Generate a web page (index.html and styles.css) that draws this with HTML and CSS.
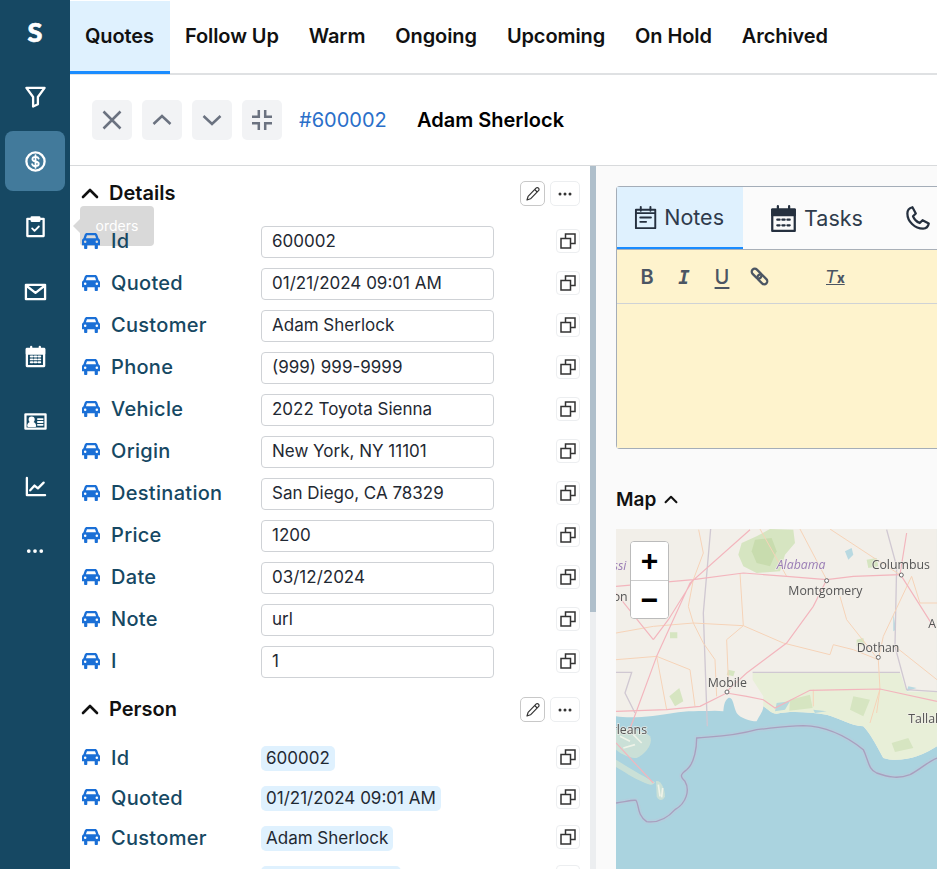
FILE: index.html
```html
<!DOCTYPE html>
<html lang="en">
<head>
    <meta charset="UTF-8">
    <meta name="viewport" content="width=device-width, initial-scale=1.0">
    <title>Quotes</title>
    <link rel="stylesheet" href="styles.css">
</head>
<body>
    <svg class="defs" width="0" height="0">
        <symbol id="car" viewBox="0 0 17 15"><path fill="currentColor" fill-rule="evenodd" d="M4.6 0h7.8c.9 0 1.7.6 2 1.4l1.2 3.5c.8.4 1.4 1.2 1.4 2.1v4.5h-2v2.5c0 .6-.4 1-1 1h-1c-.6 0-1-.4-1-1V11.500H5v2.500c0 .6-.4 1-1 1H3c-.6 0-1-.4-1-1v-2.500H0V7c0-.9.6-1.700 1.400-2.100l1.200-3.500C2.900.6 3.700 0 4.600 0zM4.700 2 3.700 4.800h9.600L12.300 2zM3 7a1.200 1.200 0 1 0 0 2.400A1.200 1.200 0 0 0 3 7zM14 7a1.200 1.200 0 1 0 0 2.400A1.200 1.200 0 0 0 14 7z"/></symbol>
        <symbol id="copy" viewBox="0 0 16 16"><path fill="none" stroke="currentColor" stroke-width="1.500" d="M1 5.500h9.500V15H1zM5.500 5.500V1H15v9.500h-4.500"/></symbol>
        <symbol id="pencil" viewBox="0 0 16 16"><path fill="none" stroke="currentColor" stroke-width="1.200" stroke-linejoin="round" d="M11 2.200c.7-.7 1.800-.7 2.500 0s.7 1.800 0 2.500L5.500 12.800 2 14l1.100-3.700zM9.700 3.500l2.900 2.900"/></symbol>
        <symbol id="dots" viewBox="0 0 16 16"><g fill="currentColor"><circle cx="3" cy="8" r="1.500"/><circle cx="8" cy="8" r="1.500"/><circle cx="13" cy="8" r="1.500"/></g></symbol>
        <symbol id="chevron" viewBox="0 0 18 11"><path fill="none" stroke="currentColor" stroke-width="2.600" stroke-linecap="round" stroke-linejoin="round" d="M2 9l7-7 7 7"/></symbol>
    </svg>

    <div class="app">
        <nav class="sidebar">
            <div class="nav-item"><span class="logo">S</span></div>
            <div class="nav-item">
                <svg class="nav-icon" viewBox="0 0 24 24"><path d="M2.500 3h19l-7 9.500V20l-5 2.500v-10z"/></svg>
            </div>
            <div class="nav-item active">
                <svg class="nav-icon" viewBox="0 0 24 24"><circle cx="12" cy="12" r="9.500"/><path class="thin" d="M15.300 9c-.4-1.200-1.700-1.800-3.300-1.800-1.800 0-3.200.9-3.200 2.400 0 3.300 6.600 1.500 6.600 4.800 0 1.500-1.500 2.400-3.400 2.400-1.700 0-3.100-.7-3.500-2M12 5.500v13"/></svg>
            </div>
            <div class="nav-item">
                <svg class="nav-icon" viewBox="0 0 24 24"><path d="M8 4H3.500v18h17V4H16"/><path d="M8 2.500h8v3.500H8z" fill="#fff"/><path class="thin" d="M8.500 14l2.500 2.500 4.500-4.500"/></svg>
            </div>
            <div class="nav-item">
                <svg class="nav-icon" viewBox="0 0 24 24"><path d="M2 5h20v15H2zM2.500 6l9.500 7.500L21.500 6"/></svg>
            </div>
            <div class="nav-item">
                <svg class="nav-icon" viewBox="0 0 24 24"><path d="M3 4.500h18V22H3z"/><path d="M3 4h18v5H3zM7.500 2v3M16.500 2v3" fill="#fff"/><path class="thin" d="M7 12h2M11 12h2M15 12h2M7 15h2M11 15h2M15 15h2M7 18h2M11 18h2M15 18h2"/></svg>
            </div>
            <div class="nav-item">
                <svg class="nav-icon" viewBox="0 0 24 24"><path d="M1.500 4.500h21v15h-21z"/><circle cx="8" cy="10" r="2" fill="#fff"/><path d="M4.500 16.500c.4-4 6.600-4 7 0z" fill="#fff"/><path class="thin" d="M14.500 9.500h5M14.500 12.500h5M14.500 15.500h5"/></svg>
            </div>
            <div class="nav-item">
                <svg class="nav-icon" viewBox="0 0 24 24"><path d="M3 3v18h19"/><path d="M6.500 16l4.500-5 3.500 3 6-6"/></svg>
            </div>
            <div class="nav-item">
                <svg class="nav-dots"><use href="#dots"/></svg>
            </div>
        </nav>
        <div class="tooltip">orders</div>

        <main class="main">
            <div class="top-tabs">
                <a class="top-tab active">Quotes</a>
                <a class="top-tab">Follow Up</a>
                <a class="top-tab">Warm</a>
                <a class="top-tab">Ongoing</a>
                <a class="top-tab">Upcoming</a>
                <a class="top-tab">On Hold</a>
                <a class="top-tab">Archived</a>
            </div>

            <div class="toolbar">
                <button class="tool-btn"><svg viewBox="0 0 20 20"><path d="M1.500 1.500l17 17M18.500 1.500l-17 17"/></svg></button>
                <button class="tool-btn"><svg viewBox="0 0 20 20"><path d="M1.500 14l8.500-8 8.500 8"/></svg></button>
                <button class="tool-btn"><svg viewBox="0 0 20 20"><path d="M1.500 6l8.500 8 8.500-8"/></svg></button>
                <button class="tool-btn"><svg viewBox="0 0 20 20"><path d="M6.800 0v6.800H0M13.200 0v6.800H20M6.800 20v-6.800H0M13.200 20v-6.800H20"/></svg></button>
                <a class="record-id">#600002</a>
                <span class="record-name">Adam Sherlock</span>
            </div>

            <div class="split">
                <section class="details">
                    <div class="section-head">
                        <svg class="chev"><use href="#chevron"/></svg>
                        <h3>Details</h3>
                        <button class="mini-btn edit"><svg><use href="#pencil"/></svg></button>
                        <button class="mini-btn more"><svg><use href="#dots"/></svg></button>
                    </div>
                    <div class="field-list">
                        <div class="field"><svg class="car"><use href="#car"/></svg><label>Id</label><input value="600002"><button class="copy"><svg><use href="#copy"/></svg></button></div>
                        <div class="field"><svg class="car"><use href="#car"/></svg><label>Quoted</label><input value="01/21/2024 09:01 AM"><button class="copy"><svg><use href="#copy"/></svg></button></div>
                        <div class="field"><svg class="car"><use href="#car"/></svg><label>Customer</label><input value="Adam Sherlock"><button class="copy"><svg><use href="#copy"/></svg></button></div>
                        <div class="field"><svg class="car"><use href="#car"/></svg><label>Phone</label><input value="(999) 999-9999"><button class="copy"><svg><use href="#copy"/></svg></button></div>
                        <div class="field"><svg class="car"><use href="#car"/></svg><label>Vehicle</label><input value="2022 Toyota Sienna"><button class="copy"><svg><use href="#copy"/></svg></button></div>
                        <div class="field"><svg class="car"><use href="#car"/></svg><label>Origin</label><input value="New York, NY 11101"><button class="copy"><svg><use href="#copy"/></svg></button></div>
                        <div class="field"><svg class="car"><use href="#car"/></svg><label>Destination</label><input value="San Diego, CA 78329"><button class="copy"><svg><use href="#copy"/></svg></button></div>
                        <div class="field"><svg class="car"><use href="#car"/></svg><label>Price</label><input value="1200"><button class="copy"><svg><use href="#copy"/></svg></button></div>
                        <div class="field"><svg class="car"><use href="#car"/></svg><label>Date</label><input value="03/12/2024"><button class="copy"><svg><use href="#copy"/></svg></button></div>
                        <div class="field"><svg class="car"><use href="#car"/></svg><label>Note</label><input value="url"><button class="copy"><svg><use href="#copy"/></svg></button></div>
                        <div class="field"><svg class="car"><use href="#car"/></svg><label>I</label><input value="1"><button class="copy"><svg><use href="#copy"/></svg></button></div>
                    </div>

                    <div class="section-head person">
                        <svg class="chev"><use href="#chevron"/></svg>
                        <h3>Person</h3>
                        <button class="mini-btn edit"><svg><use href="#pencil"/></svg></button>
                        <button class="mini-btn more"><svg><use href="#dots"/></svg></button>
                    </div>
                    <div class="chip-list">
                        <div class="field chip-row"><svg class="car"><use href="#car"/></svg><label>Id</label><div><span class="chip">600002</span></div><button class="copy"><svg><use href="#copy"/></svg></button></div>
                        <div class="field chip-row"><svg class="car"><use href="#car"/></svg><label>Quoted</label><div><span class="chip">01/21/2024 09:01 AM</span></div><button class="copy"><svg><use href="#copy"/></svg></button></div>
                        <div class="field chip-row"><svg class="car"><use href="#car"/></svg><label>Customer</label><div><span class="chip">Adam Sherlock</span></div><button class="copy"><svg><use href="#copy"/></svg></button></div>
                        <div class="field chip-row"><svg class="car"><use href="#car"/></svg><label>Phone</label><div><span class="chip">(999) 999-9999</span></div><button class="copy"><svg><use href="#copy"/></svg></button></div>
                    </div>
                </section>

                <div class="scroll-track"><div class="scroll-thumb"></div></div>

                <section class="side">
                    <div class="note-card">
                        <div class="note-tabs">
                            <a class="note-tab active">
                                <svg viewBox="0 0 24 24"><path d="M2 4h20v19H2zM7 1v4M17 1v4M2 7.500h20M6.500 12h11M6.500 16.500h6"/></svg>Notes
                            </a>
                            <a class="note-tab">
                                <svg viewBox="0 0 24 24"><path d="M2 4h20v19H2zM7 1v4M17 1v4"/><path class="solid" d="M2 4h20v5H2z"/><path d="M6.500 13h2M11 13h2M15.500 13h2M6.500 18h2M11 18h2M15.500 18h2"/></svg>Tasks
                            </a>
                            <a class="note-tab">
                                <svg viewBox="0 0 24 24"><path d="M7.500 2l3 5.500-2.500 2.500c1 2.500 3.500 5 6 6l2.500-2.500 5.500 3c-.5 2.800-2.500 4.500-5 4.500C9.500 21 3 14.500 3 7.500 3 5 4.700 2.700 7.500 2z"/></svg>
                            </a>
                        </div>
                        <div class="note-tools">
                            <span class="fmt fmt-b">B</span>
                            <span class="fmt fmt-i">I</span>
                            <span class="fmt fmt-u">U</span>
                            <svg class="fmt-link" viewBox="0 0 20 20"><rect x="1" y="3.800" width="12" height="6.400" rx="3.200" transform="rotate(45 7 7)"/><rect x="7" y="9.800" width="12" height="6.400" rx="3.200" transform="rotate(45 13 13)"/></svg>
                            <span class="fmt fmt-clear">T<small>x</small></span>
                        </div>
                        <div class="note-body"></div>
                    </div>

                    <div class="map-head">
                        <h3>Map</h3>
                        <svg class="map-chev"><use href="#chevron"/></svg>
                    </div>
                    <div class="map">
                        <svg class="map-art" viewBox="0 0 321 340" preserveAspectRatio="xMinYMin slice">
                            <g transform="translate(-16 -49.300) scale(.3333)">
                                <rect x="48" y="148" width="970" height="1030" fill="#aad3df"/>
                                <path fill="#f2efe9" d="M48 710C100 718 170 708 220 700 260 692 300 695 345 693L370 695C372 680 372 665 385 655 400 650 400 680 410 700 420 715 450 725 470 725 480 705 490 695 490 680 505 690 515 702 530 702 560 695 620 695 680 705 720 715 750 738 790 740 810 760 825 790 850 835 880 845 920 840 950 830 975 822 995 810 1011 800V148H48z"/>
                                <g fill="#dfe9d2" fill-opacity=".6">
                                    <path d="M48 750C80 745 130 750 150 770 160 790 140 820 110 835 90 835 65 825 48 810z"/>
                                    <path d="M48 840C80 860 120 885 165 908 160 918 150 918 130 908 100 895 70 875 48 862z"/>
                                    <path d="M168 905C180 900 195 925 195 950 190 965 175 965 170 950z"/>
                                </g>
                                <path d="M60 770l30 15M100 765l25 25M70 805l35-10M175 915l5 35M188 925l-3 28" fill="none" stroke="#f7f7ec" stroke-width="5" stroke-opacity=".8"/>
                                <path fill="#e8efd8" d="M458 578H900L920 636H1011V800C995 810 975 822 950 830 920 840 880 845 850 835 825 790 810 760 790 740 750 738 720 715 680 705 620 695 560 695 530 702 515 702 505 690 490 680L490 650 458 600z"/>
                                <g fill="#d6e5c1">
                                    <path d="M425 190 470 170 510 148 580 150 585 190 555 225 540 275 470 280 430 260 415 225z"/>
                                    <path d="M210 458h22v18h-22zM208 650l30-25 12 40-25 15zM570 660l60-15 8 40-70 8zM800 240l30-5 5 25-30 5zM875 790l50-15 15 30-55 12zM770 480l20-5 5 20-25 5zM385 570l20 5-5 15-20-5zM760 650l50 10-20 50-40-20z"/>
                                </g>
                                <path fill="#c8dcae" d="M465 180 515 175 530 215 510 260 470 250 455 215z"/>
                                <g fill="#aad3df" fill-opacity=".8">
                                    <path d="M735 215l20-10 5 20-15 15zM530 670l40-5-15 25-30 5zM640 690l40 5-35 5zM880 400l8 50-8 5zM925 620l25 5-30 10z"/>
                                </g>
                                <path class="shelf" d="M48 970C80 965 100 960 108 962 118 975 110 1005 140 1026 170 1030 200 1018 225 990 260 970 270 930 255 905 240 890 240 885 260 870 285 850 290 800 290 775 350 770 400 770 470 750 520 745 560 738 610 738 680 740 740 770 790 810 805 840 805 870 830 880 860 890 890 900 930 885 960 870 985 845 1011 835" fill="none" stroke="#b9c9dc" stroke-width="14" stroke-opacity=".5"/>
                                <path d="M48 970C80 965 100 960 108 962 118 975 110 1005 140 1026 170 1030 200 1018 225 990 260 970 270 930 255 905 240 890 240 885 260 870 285 850 290 800 290 775 350 770 400 770 470 750 520 745 560 738 610 738 680 740 740 770 790 810 805 840 805 870 830 880 860 890 890 900 930 885 960 870 985 845 1011 835" fill="none" stroke="#a99fbe" stroke-width="4"/>
                                <g fill="none" stroke="#d0c8d2" stroke-width="4">
                                    <path d="M332 148 310 400 322 740M860 150 890 260 885 500 920 630 1011 636M458 578H900M48 578H95L75 640 105 700"/>
                                </g>
                                <g fill="none" stroke="#f6d3b8" stroke-width="3">
                                    <path d="M48 460 160 440 280 430 430 438 380 480 385 600M430 438 420 280M48 540 170 530 270 570 285 680M170 530 200 690M280 430 310 490 345 540 350 650"/>
                                    <path d="M430 438 550 490 690 525 700 495 760 510 835 540 840 628 810 730M720 350 740 420 835 540M840 628 830 700M935 290 960 370 1011 370M935 290 850 470 835 540M885 500 1011 600M600 148 680 300M690 148 830 240 900 285M480 148 560 290M640 630 640 680M296 150 310 220 280 300 265 380 280 430"/>
                                </g>
                                <g fill="none" stroke="#f3b5bd" stroke-width="3.500">
                                    <path d="M680 300 640 380 560 490 440 580 380 635M48 695 200 690 300 680 380 640 440 650 490 660 525 685 630 632 740 630 840 628 1011 665M680 300 760 290 900 285 920 160M170 530 100 720 85 760M170 530 270 310 450 150M48 320 280 300 430 280 560 290 680 300M160 480 120 430 48 340M280 300 205 420 160 480M48 790 160 910M905 290 1000 440"/>
                                </g>
                                <g class="map-labels">
                                    <text x="38" y="270" class="state">ssi</text>
                                    <text x="530" y="268" class="state">Alabama</text>
                                    <text x="815" y="268">Columbus</text>
                                    <text x="565" y="346">Montgomery</text>
                                    <text x="38" y="364">on</text>
                                    <text x="985" y="445">A</text>
                                    <text x="770" y="517">Dothan</text>
                                    <text x="323" y="622">Mobile</text>
                                    <text x="925" y="729">Tallah</text>
                                    <text x="35" y="764">rleans</text>
                                </g>
                                <g fill="#fff" stroke="#666" stroke-width="3">
                                    <circle cx="680" cy="303" r="6"/><circle cx="904" cy="286" r="6"/><circle cx="835" cy="533" r="6"/><circle cx="381" cy="637" r="6"/>
                                </g>
                            </g>
                        </svg>
                        <div class="zoom-ctl">
                            <button class="zoom-btn">+</button>
                            <button class="zoom-btn">&minus;</button>
                        </div>
                    </div>
                </section>
            </div>
        </main>
    </div>
</body>
</html>
```

FILE: styles.css
```css
* {
    box-sizing: border-box;
}

html, body {
    height: 100%;
}

body {
    margin: 0;
    font-family: 'Inter', 'Noto Sans', sans-serif;
    color: #1f2933;
    background: #fff;
    overflow: hidden;
}

.defs {
    position: absolute;
}

.app {
    position: relative;
    display: flex;
    height: 100vh;
}

/* left nav */
.sidebar {
    width: 70px;
    flex-shrink: 0;
    background: #164863;
    padding: 1px 5px 0;
    display: flex;
    flex-direction: column;
    gap: 5px;
}

.nav-item {
    height: 60px;
    border-radius: 8px;
    display: flex;
    align-items: center;
    justify-content: center;
    flex-shrink: 0;
}

.nav-item.active {
    background: #427a9b;
}

.logo {
    color: #fff;
    font-family: 'Lato', sans-serif;
    font-weight: 900;
    font-size: 27px;
    -webkit-text-stroke: 0.7px #fff;
}

.nav-icon {
    width: 23px;
    height: 23px;
    fill: none;
    stroke: #fff;
    stroke-width: 2.400;
    stroke-linejoin: round;
    stroke-linecap: round;
}

.nav-icon .thin {
    stroke-width: 1.900;
}

.nav-dots {
    width: 20px;
    height: 20px;
    color: #fff;
}

/* sits under the page content, the car icon shows on top of it */
.tooltip {
    position: absolute;
    left: 80px;
    top: 206px;
    width: 74px;
    height: 40px;
    background: #d9d9d9;
    border-radius: 4px;
    color: #fff;
    font-size: 14px;
    line-height: 40px;
    text-align: center;
    z-index: 0;
}

.tooltip::before {
    content: "";
    position: absolute;
    left: -7px;
    top: 13px;
    border-style: solid;
    border-width: 7px 7px 7px 0;
    border-color: transparent #d9d9d9 transparent transparent;
}

.main {
    position: relative;
    z-index: 1;
    flex: 1;
    min-width: 0;
    display: flex;
    flex-direction: column;
}

/* top tabs */
.top-tabs {
    height: 75px;
    flex-shrink: 0;
    display: flex;
    border-bottom: 2px solid #dfe1e3;
    padding-top: 1px;
}

.top-tab {
    padding: 0 15px;
    font-size: 20px;
    font-weight: 600;
    letter-spacing: -0.1px;
    color: #111;
    line-height: 70px;
    height: 73px;
}

.top-tab.active {
    width: 100px;
    background: #dff1fe;
    border-bottom: 3px solid #1a8cff;
}

/* record toolbar */
.toolbar {
    height: 91px;
    flex-shrink: 0;
    display: flex;
    align-items: center;
    padding: 0 22px;
    gap: 10px;
    border-bottom: 1px solid #d8dadc;
}

.tool-btn {
    width: 40px;
    height: 40px;
    padding: 0;
    border: none;
    border-radius: 5px;
    background: #f2f3f5;
    display: flex;
    align-items: center;
    justify-content: center;
}

.tool-btn svg {
    width: 20px;
    height: 20px;
    fill: none;
    stroke: #6b7280;
    stroke-width: 2.500;
}

.record-id {
    margin-left: 7px;
    color: #2a6fc9;
    font-size: 20px;
    width: 108px;
}

.record-name {
    color: #000;
    font-size: 20px;
    font-weight: 600;
}

.split {
    flex: 1;
    min-height: 0;
    display: flex;
}

/* details column */
.details {
    width: 520px;
    flex-shrink: 0;
    padding: 15px 10px 0 11px;
    overflow: hidden;
}

.section-head {
    display: flex;
    align-items: center;
    height: 25px;
}

.section-head.person {
    margin-top: 19px;
}

.chev {
    width: 18px;
    height: 11px;
    color: #111;
}

.section-head h3 {
    margin: 0 0 2px 10px;
    flex: 1;
    font-size: 20px;
    font-weight: 600;
    color: #111;
}

.mini-btn {
    height: 25px;
    padding: 0;
    background: #fff;
    border-radius: 5px;
    display: flex;
    align-items: center;
    justify-content: center;
}

.mini-btn.edit {
    width: 25px;
    border: 1px solid #c8c8c8;
    color: #333;
}

.mini-btn.more {
    width: 30px;
    margin-left: 5px;
    border: 1px solid #eceef0;
    color: #333;
}

.mini-btn svg {
    width: 16px;
    height: 16px;
}

.field-list {
    margin-top: 20px;
    display: flex;
    flex-direction: column;
    gap: 10px;
}

.chip-list {
    margin-top: 23px;
    display: flex;
    flex-direction: column;
    gap: 15px;
}

.field {
    display: grid;
    grid-template-columns: 30px 150px 233px 1fr;
    align-items: center;
    height: 32px;
}

.field.chip-row {
    height: 25px;
    grid-template-columns: 30px 150px 1fr 24px;
}

.car {
    width: 18px;
    height: 16px;
    margin: 0 0 3px 1px;
    color: #1a6fd6;
}

.field label {
    padding-bottom: 2px;
    font-size: 20px;
    font-weight: 500;
    color: #164863;
    letter-spacing: 0.3px;
}

.chip-row label {
    padding-bottom: 0;
}

.field input {
    width: 233px;
    height: 32px;
    padding: 0 10px 2px;
    border: 1px solid #cfd2d6;
    border-radius: 4px;
    font: inherit;
    font-size: 17px;
    color: #1f2933;
    background: #fff;
}

.chip {
    display: inline-block;
    height: 25px;
    line-height: 24px;
    padding: 0 5px;
    font-size: 17px;
    color: #1f2933;
    background: #dff1fe;
    border-radius: 5px;
    white-space: nowrap;
}

.copy {
    justify-self: end;
    width: 24px;
    height: 24px;
    margin-bottom: 2px;
    padding: 0;
    border: 1px solid #eceef0;
    border-radius: 4px;
    background: #fff;
    color: #333;
    display: flex;
    align-items: center;
    justify-content: center;
}

.copy svg {
    width: 16px;
    height: 16px;
}

.scroll-track {
    width: 6px;
    flex-shrink: 0;
    background: #eceef0;
}

.scroll-thumb {
    height: 446px;
    background: #afbfcb;
}

/* right column */
.side {
    flex: 1;
    min-width: 0;
    background: #fafafa;
    padding: 20px 0 0 20px;
    overflow: hidden;
}

.note-card {
    width: 340px;
    height: 263px;
    border: 1px solid #a4adb8;
    border-right: none;
    border-radius: 4px 0 0 4px;
    display: flex;
    flex-direction: column;
}

.note-tabs {
    height: 63px;
    flex-shrink: 0;
    display: flex;
    background: #fbfbfb;
    border-bottom: 1px solid #a9b0b8;
}

.note-tab {
    display: flex;
    align-items: center;
    gap: 7px;
    padding: 0 19px 0 27px;
    height: 62px;
    font-size: 21.500px;
    color: #2f3b4c;
}

.note-tab.active {
    width: 126px;
    padding-left: 17px;
    background: #dff1fe;
    border-bottom: 2px solid #1a8cff;
}

.note-tab svg {
    width: 27px;
    height: 27px;
    fill: none;
    stroke: #25303f;
    stroke-width: 2;
    stroke-linecap: round;
    stroke-linejoin: round;
}

.note-tab svg .solid {
    fill: #25303f;
}

.note-tab:nth-child(3) {
    padding-left: 22px;
}

.note-tools {
    height: 54px;
    flex-shrink: 0;
    background: #fef3cd;
    border-bottom: 1px solid #cfd2d6;
    display: flex;
    align-items: center;
    padding-left: 23px;
    color: #4b5563;
}

.fmt {
    font-size: 20px;
    font-weight: 600;
    text-align: center;
}

.fmt-b {
    width: 14px;
    margin-right: 23px;
}

.fmt-i {
    width: 14px;
    margin-right: 23px;
    font-family: 'DejaVu Sans Mono', monospace;
    font-style: italic;
    font-weight: 700;
    font-size: 19px;
}

.fmt-u {
    width: 16px;
    margin-right: 20px;
    font-weight: 500;
    text-decoration: underline;
    text-underline-offset: 3px;
}

.fmt-link {
    width: 19px;
    height: 19px;
    margin-right: 57px;
    fill: none;
    stroke: #4b5563;
    stroke-width: 2.400;
}

.fmt-clear {
    font-family: 'DejaVu Sans', sans-serif;
    font-style: italic;
    font-weight: 500;
    font-size: 18px;
    text-decoration: underline;
}

.fmt-clear small {
    font-family: 'Inter', sans-serif;
    font-style: normal;
    font-weight: 800;
    font-size: 13px;
}

.note-body {
    flex: 1;
    background: #fef3cd;
}

.map-head {
    margin-top: 38px;
    height: 24px;
    display: flex;
    align-items: center;
    gap: 8px;
}

.map-head h3 {
    margin: 0;
    font-size: 19px;
    font-weight: 600;
    color: #111;
}

.map-chev {
    width: 14px;
    height: 9px;
    color: #111;
}

.map {
    position: relative;
    margin-top: 18px;
    height: 340px;
    overflow: hidden;
    background: #aad3df;
}

.map-art {
    display: block;
    width: 321px;
    height: 340px;
    filter: blur(0.4px);
}

.map-labels text {
    font-family: 'Open Sans', sans-serif;
    font-size: 37px;
    fill: #555;
    stroke: #f2efe9;
    stroke-width: 5px;
    stroke-opacity: .7;
    paint-order: stroke;
}

.map-labels text.state {
    font-style: italic;
    fill: #9a7db5;
}

.zoom-ctl {
    position: absolute;
    left: 14px;
    top: 12px;
    width: 39px;
    border: 1px solid #bbb;
    border-radius: 4px;
    background: #fff;
    overflow: hidden;
}

.zoom-btn {
    display: block;
    width: 100%;
    height: 38px;
    padding: 0;
    border: none;
    background: #fff;
    color: #000;
    font-family: 'Liberation Sans', sans-serif;
    font-size: 30px;
    font-weight: 700;
    line-height: 34px;
}

.zoom-btn + .zoom-btn {
    border-top: 1px solid #ccc;
}
```
